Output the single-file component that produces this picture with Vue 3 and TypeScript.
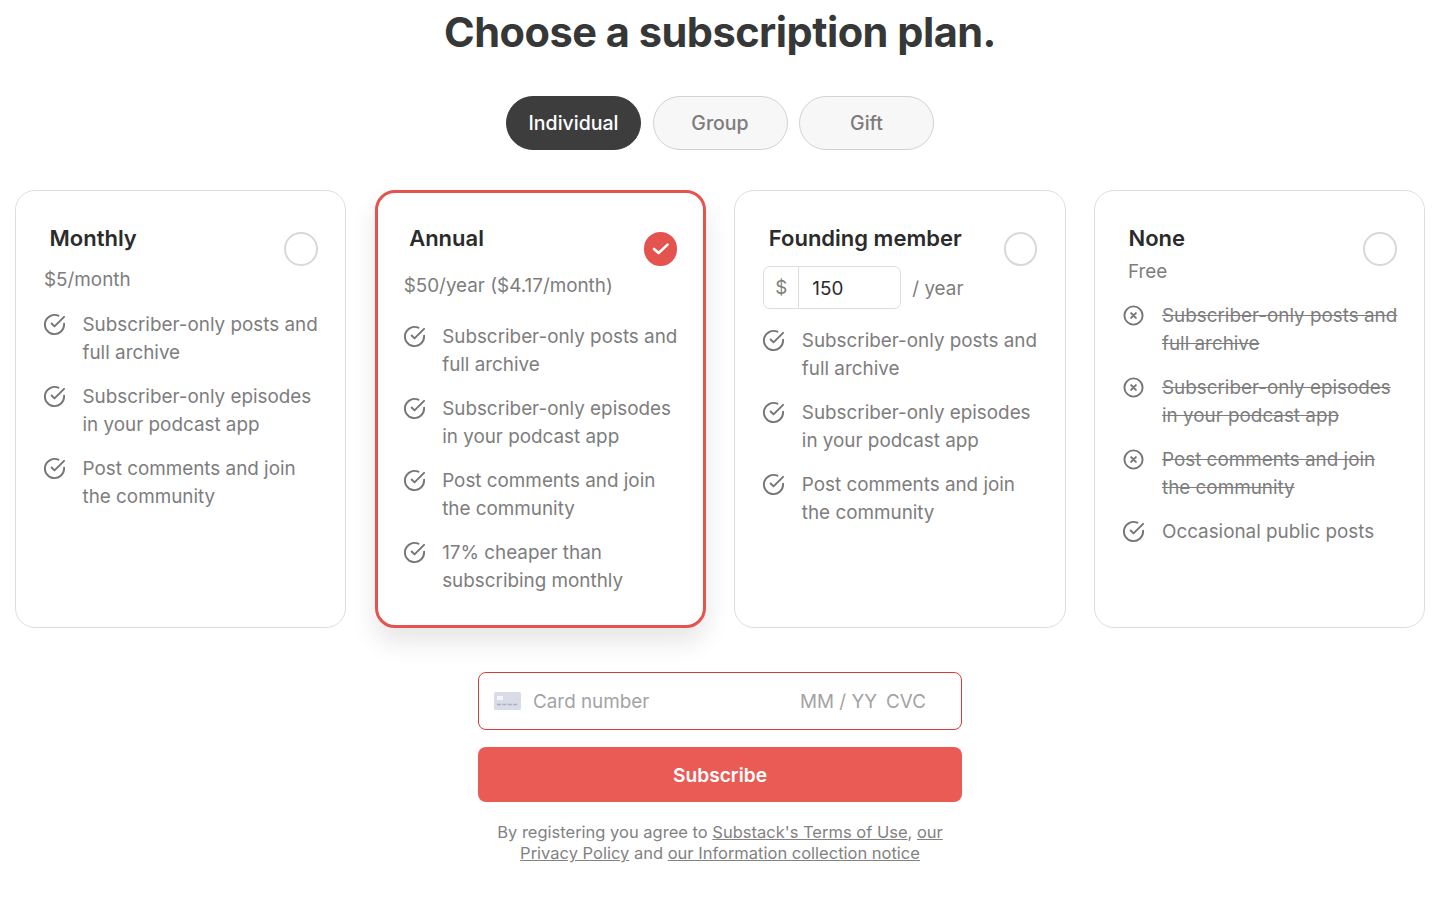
<script setup lang="ts">
interface Feature { text: string; off?: boolean }
interface Plan { name: string; cls: string; price?: string; selected?: boolean; custom?: boolean; features: Feature[] }
const base: Feature[] = [
  { text: 'Subscriber-only posts and full archive' },
  { text: 'Subscriber-only episodes in your podcast app' },
  { text: 'Post comments and join the community' },
]
const plans: Plan[] = [
  { name: 'Monthly', cls: 'monthly', price: '$5/month', features: base },
  { name: 'Annual', cls: 'annual', price: '$50/year ($4.17/month)', selected: true, features: [...base, { text: '17% cheaper than subscribing monthly' }] },
  { name: 'Founding member', cls: 'founding', custom: true, features: base },
  { name: 'None', cls: 'none', price: 'Free', features: [...base.map(f => ({ text: f.text, off: true })), { text: 'Occasional public posts' }] },
]
const tabs = ['Individual', 'Group', 'Gift']
</script>

<template>
  <main class="page">
    <h1 class="title">Choose a subscription plan.</h1>
    <div class="tabs">
      <button v-for="(t, i) in tabs" :key="t" class="tab" :class="{ active: i === 0 }">{{ t }}</button>
    </div>
    <section class="plans">
      <article v-for="p in plans" :key="p.name" class="card" :class="[p.cls, { selected: p.selected }]">
        <span class="radio" :class="{ on: p.selected }">
          <svg v-if="p.selected" width="20" height="20" viewBox="0 0 20 20" fill="none" stroke="#fff" stroke-width="2.6" stroke-linecap="round" stroke-linejoin="round"><path d="M3 10l4.6 4 9-8.4" /></svg>
        </span>
        <h2 class="name">{{ p.name }}</h2>
        <p v-if="p.price" class="price">{{ p.price }}</p>
        <div v-if="p.custom" class="custom">
          <div class="amount"><span class="cur">$</span><span class="val">150</span></div>
          <span class="per">/ year</span>
        </div>
        <ul class="features">
          <li v-for="f in p.features" :key="f.text" class="feature" :class="{ off: f.off }">
            <svg v-if="!f.off" class="ico" width="23" height="23" viewBox="0 0 24 24" fill="none" stroke="#757575" stroke-width="2" stroke-linecap="round" stroke-linejoin="round"><path d="M22 11.08V12a10 10 0 1 1-5.93-9.14" /><path d="M22 4L12 14.01l-3-3" /></svg>
            <svg v-else class="ico" width="23" height="23" viewBox="0 0 24 24" fill="none" stroke="#757575" stroke-width="2" stroke-linecap="round"><circle cx="12" cy="12" r="9.5" /><path d="M9.5 9.5l5 5M14.5 9.5l-5 5" /></svg>
            <span>{{ f.text }}</span>
          </li>
        </ul>
      </article>
    </section>
    <div class="pay">
      <div class="cardfield">
        <svg width="27" height="18" viewBox="0 0 27 18"><rect width="27" height="18" rx="1.5" fill="#d9dce6" /><rect x="3" y="4" width="6" height="4" fill="#f4f5f8" /><path d="M3 12.5h21" stroke="#a9aec2" stroke-width="1.3" stroke-dasharray="4 1.4" /></svg>
        <span class="ph num">Card number</span>
        <span class="ph exp">MM / YY</span>
        <span class="ph cvc">CVC</span>
      </div>
      <button class="subscribe">Subscribe</button>
      <p class="legal">By registering you agree to <a>Substack's Terms of Use</a>, <a>our</a> <a>Privacy Policy</a> and <a>our Information collection notice</a></p>
    </div>
  </main>
</template>

<style>
html, body { margin: 0; background: #fff; }
</style>

<style scoped>
.page {
  font-family: Inter, "Liberation Sans", sans-serif;
  height: 907px;
  box-sizing: border-box;
  padding: 0 31px 0 15px;
  display: flex;
  flex-direction: column;
  align-items: center;
  overflow: hidden;
}
.title {
  margin: 6px 0 0;
  font-size: 41.5px;
  line-height: 52px;
  font-weight: 700;
  color: #363737;
  letter-spacing: -0.5px;
}
.tabs { display: flex; gap: 11.5px; margin-top: 38px; }
.tab {
  width: 135px;
  height: 54px;
  box-sizing: border-box;
  border-radius: 28px;
  border: 1px solid #d2d2d2;
  background: #f7f7f7;
  color: #7c7c7c;
  font: 500 19.5px Inter, sans-serif;
}
.tab.active { background: #3d3d3d; border-color: #3d3d3d; color: #fff; }
.plans {
  display: grid;
  grid-template-columns: repeat(4, 331.2px);
  column-gap: 28.47px;
  margin-top: 40px;
  align-self: flex-start;
}
.card {
  position: relative;
  height: 438px;
  box-sizing: border-box;
  border: 1px solid #dedede;
  border-radius: 20px;
  padding: 32px 22px 0 28px;
  background: #fff;
}
.card.selected {
  border: 3px solid #e5534e;
  padding: 30px 20px 0 26px;
  box-shadow: 0 14px 26px rgba(0, 0, 0, 0.1);
}
.radio {
  position: absolute;
  top: 41px;
  right: 27.5px;
  width: 33.5px;
  height: 33.5px;
  box-sizing: border-box;
  border: 2px solid #d8d8d8;
  border-radius: 50%;
  display: flex;
  align-items: center;
  justify-content: center;
}
.selected .radio { top: 39px; right: 25.5px; }
.radio.on { background: #e5534e; border-color: #e5534e; }
.name {
  margin: 0;
  padding-left: 5.5px;
  font-size: 22px;
  line-height: 30px;
  font-weight: 600;
  color: #2b2b2b;
}
.price {
  margin: 0;
  font-size: 18.85px;
  line-height: 28px;
  color: #7d7d7d;
}
.monthly .price { margin-top: 13px; }
.annual .price { margin-top: 19px; }
.none .price { margin-top: 5px; padding-left: 5px; }
.custom { display: flex; align-items: center; gap: 11px; margin-top: 13px; }
.amount {
  display: flex;
  width: 138px;
  height: 43px;
  box-sizing: border-box;
  border: 1px solid #dedede;
  border-radius: 7px;
  align-items: center;
  font-size: 18.85px;
}
.cur { width: 35px; height: 100%; display: flex; align-items: center; justify-content: center; border-right: 1px solid #dedede; color: #7d7d7d; box-sizing: border-box; }
.val { padding: 2px 0 0 13px; color: #2b2b2b; }
.per { font-size: 18.85px; color: #7d7d7d; padding-top: 1px; }
.features { list-style: none; margin: 23px 0 0; padding: 0; display: flex; flex-direction: column; gap: 17px; }
.monthly .features { margin-top: 17px; }
.founding .features { margin-top: 18px; }
.none .features { margin-top: 16px; }
.feature {
  display: grid;
  grid-template-columns: 23px 1fr;
  column-gap: 15.5px;
  font-size: 18.85px;
  line-height: 27.5px;
  color: #7d7d7d;
}
.ico { margin: 2px 0 0 -1px; }
.none .feature { margin-left: 0.5px; }
.off span { text-decoration: line-through; }
.pay { width: 484px; margin-top: 44px; display: flex; flex-direction: column; }
.cardfield {
  height: 58px;
  box-sizing: border-box;
  border: 1px solid #d63a3a;
  border-radius: 8px;
  display: flex;
  align-items: center;
  padding-left: 15px;
  font-size: 18.85px;
  color: #a3a3a3;
  white-space: nowrap;
}
.num { margin-left: 12px; width: 267px; }
.exp { width: 86px; }
.subscribe {
  margin-top: 17px;
  height: 55px;
  border: 0;
  border-radius: 8px;
  background: #e95b54;
  color: #fff;
  font: 600 19.2px Inter, sans-serif;
}
.legal {
  margin: 20px 0 0;
  text-align: center;
  font-size: 16.5px;
  line-height: 21px;
  color: #828282;
}
.legal a { text-decoration: underline; }
</style>
